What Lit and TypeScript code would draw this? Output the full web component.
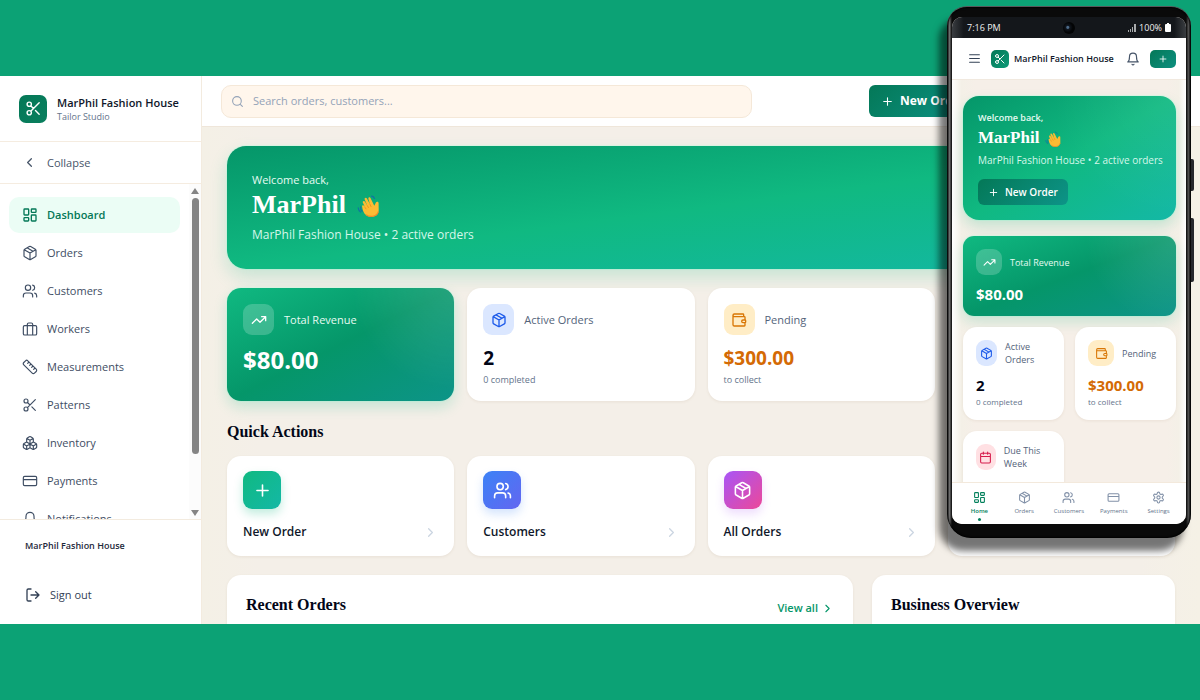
import { LitElement, html, css, svg } from "lit";
import { customElement, property } from "lit/decorators.js";
import { classMap } from "lit/directives/class-map.js";

const circle = (x: number, y: number, r: number) =>
  `M${x - r} ${y}a${r} ${r} 0 1 0 ${2 * r} 0a${r} ${r} 0 1 0 ${-2 * r} 0`;

const ICONS: Record<string, string> = {
  scissors: `${circle(6, 6, 3)}M8.12 8.12 12 12M20 4 8.12 15.88${circle(6, 18, 3)}M14.8 14.8 20 20`,
  dashboard:
    "M4 3h5a1 1 0 0 1 1 1v7a1 1 0 0 1-1 1H4a1 1 0 0 1-1-1V4a1 1 0 0 1 1-1zM15 3h5a1 1 0 0 1 1 1v3a1 1 0 0 1-1 1h-5a1 1 0 0 1-1-1V4a1 1 0 0 1 1-1zM15 12h5a1 1 0 0 1 1 1v7a1 1 0 0 1-1 1h-5a1 1 0 0 1-1-1v-7a1 1 0 0 1 1-1zM4 16h5a1 1 0 0 1 1 1v3a1 1 0 0 1-1 1H4a1 1 0 0 1-1-1v-3a1 1 0 0 1 1-1z",
  package:
    "M11 21.73a2 2 0 0 0 2 0l7-4A2 2 0 0 0 21 16V8a2 2 0 0 0-1-1.73l-7-4a2 2 0 0 0-2 0l-7 4A2 2 0 0 0 3 8v8a2 2 0 0 0 1 1.73zM12 22V12M3.29 7 12 12l8.71-5M7.5 4.27l9 5.15",
  users: `M16 21v-2a4 4 0 0 0-4-4H6a4 4 0 0 0-4 4v2${circle(9, 7, 4)}M22 21v-2a4 4 0 0 0-3-3.87M16 3.13a4 4 0 0 1 0 7.75`,
  briefcase:
    "M4 7h16a2 2 0 0 1 2 2v10a2 2 0 0 1-2 2H4a2 2 0 0 1-2-2V9a2 2 0 0 1 2-2zM16 21V5a2 2 0 0 0-2-2h-4a2 2 0 0 0-2 2v16",
  ruler:
    "M21.3 15.3a2.4 2.4 0 0 1 0 3.4l-2.6 2.6a2.4 2.4 0 0 1-3.4 0L2.7 8.7a2.41 2.41 0 0 1 0-3.4l2.6-2.6a2.41 2.41 0 0 1 3.4 0ZM14.5 12.5l2-2M11.5 9.5l2-2M8.5 6.5l2-2M17.5 15.5l2-2",
  boxes:
    "M2.97 12.92A2 2 0 0 0 2 14.63v3.24a2 2 0 0 0 .97 1.71l3 1.8a2 2 0 0 0 2.06 0L12 19v-5.5l-5-3-4.03 2.42ZM7 16.5l-4.74-2.85M7 16.5l5-3M7 16.5v5.17M12 13.5V19l3.97 2.38a2 2 0 0 0 2.06 0l3-1.8a2 2 0 0 0 .97-1.71v-3.24a2 2 0 0 0-.97-1.71L17 10.5l-5 3ZM17 16.5l-5-3M17 16.5l4.74-2.85M17 16.5v5.17M7.97 4.42A2 2 0 0 0 7 6.13v4.37l5 3 5-3V6.13a2 2 0 0 0-.97-1.71l-3-1.8a2 2 0 0 0-2.06 0l-3 1.8ZM12 8 7.26 5.15M12 8l4.74-2.85M12 13.5V8",
  card: "M4 5h16a2 2 0 0 1 2 2v10a2 2 0 0 1-2 2H4a2 2 0 0 1-2-2V7a2 2 0 0 1 2-2zM2 10h20",
  bell: "M6 8a6 6 0 0 1 12 0c0 7 3 9 3 9H3s3-2 3-9M10.3 21a1.94 1.94 0 0 0 3.4 0",
  logout: "M9 21H5a2 2 0 0 1-2-2V5a2 2 0 0 1 2-2h4M16 17l5-5-5-5M21 12H9",
  wallet:
    "M19 7V4a1 1 0 0 0-1-1H5a2 2 0 0 0 0 4h15a1 1 0 0 1 1 1v4h-3a2 2 0 0 0 0 4h3a1 1 0 0 0 1-1v-2a1 1 0 0 0-1-1M3 5v14a2 2 0 0 0 2 2h15a1 1 0 0 0 1-1v-4",
  trend: "M22 7l-8.5 8.5-5-5L2 17M16 7h6v6",
  calendar:
    "M8 2v4M16 2v4M5 4h14a2 2 0 0 1 2 2v14a2 2 0 0 1-2 2H5a2 2 0 0 1-2-2V6a2 2 0 0 1 2-2zM3 10h18",
  gear: `M12.22 2h-.44a2 2 0 0 0-2 2v.18a2 2 0 0 1-1 1.73l-.43.25a2 2 0 0 1-2 0l-.15-.08a2 2 0 0 0-2.73.73l-.22.38a2 2 0 0 0 .73 2.73l.15.1a2 2 0 0 1 1 1.72v.51a2 2 0 0 1-1 1.74l-.15.09a2 2 0 0 0-.73 2.73l.22.38a2 2 0 0 0 2.73.73l.15-.08a2 2 0 0 1 2 0l.43.25a2 2 0 0 1 1 1.73V20a2 2 0 0 0 2 2h.44a2 2 0 0 0 2-2v-.18a2 2 0 0 1 1-1.73l.43-.25a2 2 0 0 1 2 0l.15.08a2 2 0 0 0 2.73-.73l.22-.39a2 2 0 0 0-.73-2.73l-.15-.08a2 2 0 0 1-1-1.74v-.5a2 2 0 0 1 1-1.74l.15-.09a2 2 0 0 0 .73-2.73l-.22-.38a2 2 0 0 0-2.73-.73l-.15.08a2 2 0 0 1-2 0l-.43-.25a2 2 0 0 1-1-1.73V4a2 2 0 0 0-2-2z${circle(12, 12, 3)}`,
  search: `${circle(11, 11, 8)}M21 21l-4.3-4.3`,
  plus: "M5 12h14M12 5v14",
  left: "M15 18l-6-6 6-6",
  right: "M9 18l6-6-6-6",
  menu: "M3 5h18M3 12h18M3 19h18",
};

const icon = (name: string, size: number, weight = 2) => html`<svg
  class="icon"
  width=${size}
  height=${size}
  viewBox="0 0 24 24"
  fill="none"
  stroke="currentColor"
  stroke-width=${weight}
  stroke-linecap="round"
  stroke-linejoin="round"
  aria-hidden="true"
>
  ${svg`<path d=${ICONS[name]}></path>`}
</svg>`;

const hand = (size: number) => html`<svg class="icon" width=${size} height=${size} viewBox="0 0 24 24" aria-hidden="true">
  ${svg`
    <path d="M9.2 22.2C6.4 20 5.6 16.600 5.100 13.400C4.900 12.300 6.500 11.700 7.200 12.900L8.100 14.500L5.800 9.600C5.200 8.100 7.100 7.200 7.900 8.600L10.400 12.700L7.700 6.600C7.100 5 9.100 4.100 9.900 5.600L13 11.300L11.400 5.900C11 4.300 13 3.700 13.600 5.200L17.300 12.700L18.900 9.600C19.600 8.300 21.800 8.700 21.600 10.300L21.700 17.200C21.500 21.800 18.400 23.600 15 23.700C12.700 23.800 10.800 23.400 9.200 22.200Z" fill="#fcbb33"/>
    <path d="M10.400 12.700L11.400 14.500M13 11.300L14 13.600M8.100 14.500L9 15.900" stroke="#e98d1c" stroke-width=".8" stroke-linecap="round"/>
    <path d="M9 21.700C12.500 24.200 19.500 24.500 21.400 18.500" fill="none" stroke="#f08a28" stroke-width="1.100"/>
    <path d="M3.600 13.900C3.500 15.700 4 17.300 5.100 18.500M1.200 14.900C1.400 16.700 2.200 18.100 3.600 19.100M14.600 3.100C16 3.300 17 4.200 17.500 5.500" fill="none" stroke="#1172a5" stroke-width="1.100" stroke-linecap="round"/>`}
</svg>`;

interface Stat {
  icon: string;
  label: string;
  value: string;
  note?: string;
  tone: string;
}

const REVENUE: Stat = { icon: "trend", label: "Total Revenue", value: "$80.00", tone: "revenue" };
const ACTIVE: Stat = { icon: "package", label: "Active Orders", value: "2", note: "0 completed", tone: "blue" };
const PENDING: Stat = { icon: "wallet", label: "Pending", value: "$300.00", note: "to collect", tone: "amber" };
const DUE: Stat = { icon: "calendar", label: "Due This Week", value: "", tone: "rose" };

const base = css`
  * {
    box-sizing: border-box;
  }
  h1, h2, p {
    margin: 0;
  }
  a {
    color: inherit;
    text-decoration: none;
  }
  button, input {
    font: inherit;
    color: inherit;
    border: 0;
    margin: 0;
    padding: 0;
    background: none;
  }
  .icon {
    display: block;
    flex-shrink: 0;
  }
  .serif {
    font-family: "Liberation Serif", serif;
    font-weight: 700;
  }
`;

@customElement("stat-card")
class StatCard extends LitElement {
  @property({ attribute: false }) stat!: Stat;
  @property({ type: Boolean, reflect: true }) compact = false;

  static styles = [
    base,
    css`
      :host {
        display: block;
        min-width: 0;
        --pad: 16px;
        --tile: 31px;
      }
      :host([compact]) {
        --pad: 13px;
        --tile: 26px;
      }
      .card {
        height: 100%;
        padding: var(--pad) var(--pad) 14px;
        border-radius: 14px;
        background: #fff;
        box-shadow: 0 1px 3px rgba(120, 90, 40, 0.09);
      }
      .head {
        display: flex;
        align-items: center;
        gap: 10px;
        color: #53637a;
        font-size: 11px;
        line-height: 14px;
        font-weight: 500;
      }
      .tile {
        width: var(--tile);
        height: var(--tile);
        display: grid;
        place-items: center;
        border-radius: 9px;
      }
      .value {
        min-height: 30px;
        margin-top: 8px;
        font-size: 19px;
        line-height: 30px;
        font-weight: 700;
        color: #020617;
      }
      .note {
        font-size: 9px;
        line-height: 14px;
        color: #64748b;
      }
      .blue .tile {
        background: #dbe7ff;
        color: #1d5bea;
      }
      .amber .tile {
        background: #ffedc6;
        color: #d97706;
      }
      .amber .value {
        color: #d46a04;
      }
      .rose .tile {
        background: #ffe0e3;
        color: #d61c4c;
      }
      .revenue {
        color: #fff;
        background:
          radial-gradient(circle at 100% 0, rgba(255, 255, 255, 0.13), transparent 40%),
          linear-gradient(to bottom right, #10b981, #059669 50%, #0d9488);
        box-shadow: 0 6px 14px rgba(16, 185, 129, 0.2), 0 0 0 1px rgba(209, 250, 229, 0.5);
      }
      .revenue .head {
        color: #e6fbf2;
      }
      .revenue .tile {
        background: rgba(255, 255, 255, 0.2);
        color: #fff;
      }
      .revenue .value {
        color: #fff;
        font-size: 24px;
        line-height: 34px;
      }
      :host([compact]) .card {
        padding-bottom: 12px;
      }
      :host([compact]) .head {
        gap: 8px;
        font-size: 9px;
        line-height: 13px;
      }
      :host([compact]) .value {
        min-height: 22px;
        font-size: 15px;
        line-height: 22px;
      }
      :host([compact]) .note {
        font-size: 8px;
        line-height: 12px;
      }
      :host([compact]) .revenue {
        padding-bottom: 11px;
        border-radius: 11px;
      }
    `,
  ];

  render() {
    const s = this.stat;
    return html`<article class=${classMap({ card: true, [s.tone]: true })}>
      <div class="head">
        <span class="tile">${icon(s.icon, this.compact ? 13 : 16)}</span>
        <span>${s.label}</span>
      </div>
      <p class="value">${s.value}</p>
      ${s.note ? html`<p class="note">${s.note}</p>` : ""}
    </article>`;
  }
}

@customElement("phone-preview")
class PhonePreview extends LitElement {
  static styles = [
    base,
    css`
      :host {
        display: block;
        width: 244px;
        aspect-ratio: 244 / 532;
        color: #0f172a;
      }
      .body {
        position: relative;
        height: 100%;
        padding: 10px 5px 14px;
        border-radius: 20px 20px 24px 24px;
        background: linear-gradient(90deg, #1a1a1a, #777 1%, #0a0a0a 2%, #0a0a0a 98%, #555 99%, #111);
        border-top: 1px solid #56585b;
        box-shadow: -8px 13px 7px rgba(0, 0, 0, 0.54), inset 0 0 2px 1px #000;
      }
      .key {
        position: absolute;
        right: -3px;
        width: 3px;
        border-radius: 0 2px 2px 0;
        background: #26282c;
      }
      .power {
        top: 152px;
        height: 32px;
      }
      .volume {
        top: 211px;
        height: 64px;
      }
      .screen {
        height: 100%;
        display: flex;
        flex-direction: column;
        overflow: hidden;
        border-radius: 10px;
        background: #f5efe8;
      }
      .status {
        display: grid;
        grid-template-columns: 1fr auto 1fr;
        align-items: center;
        height: 21px;
        flex-shrink: 0;
        padding: 0 15px;
        background: linear-gradient(90deg, #3a3d41, #14171b 5%, #14171b 95%, #3a3d41);
        color: #f1f1f1;
        font-size: 9px;
      }
      .lens {
        width: 12px;
        height: 12px;
        border-radius: 50%;
        background: radial-gradient(circle at 40% 45%, #4d6b8a 0 1px, #10161f 2px, #030405 5px);
      }
      .battery {
        display: flex;
        align-items: center;
        justify-content: flex-end;
        gap: 3px;
      }
      header {
        display: flex;
        align-items: center;
        height: 42px;
        flex-shrink: 0;
        padding: 0 10px 0 16px;
        background: #fff;
        border-bottom: 1px solid #f1e9df;
      }
      .menu {
        color: #334155;
      }
      .logo {
        width: 18px;
        height: 18px;
        margin: 0 5px 0 10px;
        display: grid;
        place-items: center;
        border-radius: 5px;
        background: linear-gradient(135deg, #047857, #0d9a78);
        color: #fff;
      }
      .name {
        flex: 1;
        font-size: 9px;
        font-weight: 600;
        white-space: nowrap;
      }
      .alerts {
        color: #475569;
      }
      .add {
        width: 26px;
        height: 18px;
        margin-left: 10px;
        display: grid;
        place-items: center;
        border-radius: 5px;
        background: linear-gradient(135deg, #047857, #0d8f80);
        color: #fff;
      }
      main {
        flex: 1;
        min-height: 0;
        overflow: hidden;
        padding: 16px 10px 0 11px;
        background: linear-gradient(90deg, #fff, #f4f0e7 4%, #f6efe8 10%, #f6efe8 92%, #f4f0e7 97%, #fff);
      }
      .hero {
        padding: 15px;
        border-radius: 16px;
        color: #fff;
        background:
          radial-gradient(circle at 100% 0, rgba(255, 255, 255, 0.07), transparent 50%),
          linear-gradient(to bottom right, #059669, #10b981 50%, #14b8a6);
        box-shadow: 0 7px 14px rgba(16, 185, 129, 0.22), 0 0 0 1px rgba(209, 250, 229, 0.6);
      }
      .welcome {
        font-size: 9px;
        line-height: 14px;
        font-weight: 600;
        color: #e6fbf2;
      }
      h1 {
        display: flex;
        align-items: center;
        gap: 6px;
        font-size: 17px;
        line-height: 26px;
      }
      .sub {
        font-size: 10px;
        line-height: 18px;
        color: #d5f7ea;
        white-space: nowrap;
      }
      .new {
        display: inline-flex;
        align-items: center;
        gap: 6px;
        height: 26px;
        margin-top: 10px;
        padding: 0 10px;
        border-radius: 6px;
        background: linear-gradient(135deg, #047857, #0d9488);
        font-size: 10px;
        font-weight: 600;
      }
      .stats {
        display: grid;
        grid-template-columns: 1fr 1fr;
        gap: 11px;
        margin-top: 16px;
      }
      .wide {
        grid-column: span 2;
      }
      nav {
        display: grid;
        grid-template-columns: repeat(5, minmax(0, 1fr));
        height: 42px;
        flex-shrink: 0;
        padding: 8px 5px 0;
        background: #fff;
        border-top: 1px solid #f3e9dc;
        color: #8291a8;
        font-size: 6px;
        line-height: 8px;
        font-weight: 500;
      }
      nav a {
        display: flex;
        flex-direction: column;
        align-items: center;
        gap: 3px;
      }
      nav span {
        color: #64748b;
      }
      nav .current,
      .current span {
        color: #04805c;
        font-weight: 600;
      }
      .current::after {
        content: "";
        width: 3px;
        height: 3px;
        border-radius: 50%;
        background: #04805c;
      }
    `,
  ];

  render() {
    const tabs = [
      ["dashboard", "Home"],
      ["package", "Orders"],
      ["users", "Customers"],
      ["card", "Payments"],
      ["gear", "Settings"],
    ];
    return html`<div class="body">
      <span class="key power"></span><span class="key volume"></span>
      <div class="screen">
        <div class="status">
          <span>7:16 PM</span>
          <span class="lens"></span>
          <span class="battery">
            <svg class="icon" width="8" height="8" viewBox="0 0 8 8" fill="#a9abad" aria-hidden="true">
              <path d="M0 6h1v2H0zM2 5h1v3H2zM4 3h1v5H4zM6 0h2v8H6z" />
            </svg>
            <span>100%</span>
            <svg class="icon" width="6" height="9" viewBox="0 0 6 9" fill="#fff" aria-hidden="true">
              <path d="M2 0h2v1h1a1 1 0 0 1 1 1v6a1 1 0 0 1-1 1H1a1 1 0 0 1-1-1V2a1 1 0 0 1 1-1h1z" />
            </svg>
          </span>
        </div>
        <header>
          <button class="menu" aria-label="Menu">${icon("menu", 13)}</button>
          <span class="logo">${icon("scissors", 12)}</span>
          <span class="name">MarPhil Fashion House</span>
          <button class="alerts" aria-label="Notifications">${icon("bell", 14)}</button>
          <button class="add" aria-label="New order">${icon("plus", 10)}</button>
        </header>
        <main>
          <section class="hero">
            <p class="welcome">Welcome back,</p>
            <h1 class="serif">MarPhil ${hand(17)}</h1>
            <p class="sub">MarPhil Fashion House • 2 active orders</p>
            <button class="new">${icon("plus", 11)}New Order</button>
          </section>
          <section class="stats">
            <stat-card class="wide" compact .stat=${REVENUE}></stat-card>
            <stat-card compact .stat=${ACTIVE}></stat-card>
            <stat-card compact .stat=${PENDING}></stat-card>
            <stat-card compact .stat=${DUE}></stat-card>
          </section>
        </main>
        <nav>
          ${tabs.map(
            ([name, label], i) => html`<a href="#" class=${classMap({ current: i === 0 })}>
              ${icon(name, 13)}<span>${label}</span>
            </a>`
          )}
        </nav>
      </div>
    </div>`;
  }
}

@customElement("app-root")
class AppRoot extends LitElement {
  static styles = [
    base,
    css`
      :host {
        display: block;
        box-sizing: border-box;
        position: relative;
        height: 100vh;
        padding: 76px 0;
        overflow: hidden;
        background: #0ca275;
        color: #0f172a;
        font-family: "Open Sans", "Noto Sans", sans-serif;
        font-size: 12px;
        line-height: 16px;
      }
      .window {
        height: 100%;
        display: grid;
        grid-template-columns: 202px minmax(0, 1fr);
        grid-template-rows: minmax(0, 1fr);
        overflow: hidden;
        background: linear-gradient(90deg, #f4f0e6 202px, #f4efe8 260px, #f4efe8 95%, #f5f1e6);
      }
      aside {
        display: flex;
        flex-direction: column;
        min-height: 0;
        background: #fff;
        border-right: 1px solid #f3ebdf;
      }
      .brand {
        display: flex;
        align-items: center;
        gap: 10px;
        height: 66px;
        flex-shrink: 0;
        padding: 0 19px;
        border-bottom: 1px solid #f5ece0;
      }
      .logo {
        width: 28px;
        height: 28px;
        display: grid;
        place-items: center;
        border-radius: 7px;
        background: linear-gradient(135deg, #047857, #0a7f5e);
        color: #fff;
      }
      .brand-name {
        font-size: 11px;
        line-height: 15px;
        font-weight: 600;
        white-space: nowrap;
      }
      .brand-sub {
        font-size: 9px;
        line-height: 13px;
        color: #64748b;
      }
      .collapse {
        display: flex;
        align-items: center;
        gap: 10px;
        height: 42px;
        flex-shrink: 0;
        padding: 0 22px;
        border-bottom: 1px solid #f5ece0;
        color: #475569;
        font-size: 11px;
      }
      .menu {
        display: flex;
        flex: 1;
        min-height: 0;
        overflow: hidden;
      }
      nav {
        flex: 1;
        display: flex;
        flex-direction: column;
        gap: 2px;
        padding: 13px 9px 0;
      }
      nav a {
        display: flex;
        align-items: center;
        gap: 9px;
        height: 36px;
        flex-shrink: 0;
        padding: 0 13px;
        border-radius: 10px;
        color: #3e4d63;
        font-size: 11px;
      }
      nav .current {
        background: #ebfdf5;
        color: #047857;
        font-weight: 600;
      }
      .scroll {
        width: 12px;
        display: flex;
        flex-direction: column;
        align-items: center;
        padding: 4px 0 3px;
        background: #fcfcfc;
        color: #858585;
      }
      .thumb {
        flex: 0 1 78%;
        width: 7px;
        margin: 4px 0 auto;
        border-radius: 4px;
        background: currentColor;
      }
      .account {
        height: 105px;
        flex-shrink: 0;
        padding: 18px 25px 0;
        border-top: 1px solid #f3ebdf;
        color: #1e293b;
      }
      .account-name {
        font-size: 9px;
        font-weight: 600;
      }
      .signout {
        display: flex;
        align-items: center;
        gap: 9px;
        margin-top: 33px;
        color: #334155;
        font-size: 11px;
      }
      .page {
        display: flex;
        flex-direction: column;
        min-width: 0;
        overflow: hidden;
      }
      .top {
        display: grid;
        grid-template-columns: minmax(0, 1fr) 312px;
        align-items: center;
        justify-items: start;
        height: 51px;
        flex-shrink: 0;
        padding: 0 19px;
        background: #fff;
        border-bottom: 1px solid #efe6da;
      }
      .search {
        display: flex;
        align-items: center;
        gap: 9px;
        width: 100%;
        max-width: 531px;
        height: 33px;
        padding: 0 9px;
        border: 1px solid #f5e8d8;
        border-radius: 10px;
        background: #fff6ec;
        color: #94a3b8;
      }
      .search input {
        flex: 1;
        min-width: 0;
        font-size: 11px;
        outline: 0;
      }
      .search input::placeholder {
        color: #94a3b8;
        opacity: 1;
      }
      .primary {
        display: flex;
        align-items: center;
        gap: 6px;
        height: 32px;
        padding: 0 12px;
        border-radius: 6px;
        background: linear-gradient(135deg, #047857, #0d9488);
        color: #fff;
        font-size: 12px;
        font-weight: 700;
      }
      main {
        padding: 19px 25px 0;
      }
      .hero {
        height: 123px;
        padding: 25px;
        border-radius: 19px;
        background: linear-gradient(to bottom right, #059669, #10b981 50%, #14b8a6);
        box-shadow: 0 8px 18px rgba(16, 185, 129, 0.2), 0 0 0 1px rgba(209, 250, 229, 0.6);
        color: #fff;
      }
      .welcome {
        font-size: 11px;
        line-height: 18px;
        font-weight: 500;
        color: #e6fbf2;
      }
      h1 {
        display: flex;
        align-items: center;
        gap: 11px;
        font-size: 26px;
        line-height: 32px;
      }
      .hero-sub {
        margin-top: 5px;
        font-size: 12px;
        line-height: 18px;
        color: #d5f7ea;
      }
      .grid {
        display: grid;
        grid-template-columns: repeat(4, minmax(0, 1fr));
        gap: 13px;
      }
      .stats {
        margin-top: 19px;
      }
      h2 {
        font-size: 16px;
        line-height: 20px;
        color: #020617;
      }
      .quick {
        margin: 21px 0 14px;
      }
      .action {
        display: grid;
        grid-template-columns: 1fr auto;
        align-items: center;
        row-gap: 13px;
        height: 100px;
        padding: 15px 16px 14px;
        border-radius: 14px;
        background: #fff;
        box-shadow: 0 1px 3px rgba(120, 90, 40, 0.09);
        font-size: 12px;
        line-height: 20px;
        font-weight: 600;
      }
      .tile {
        grid-column: span 2;
        width: 38px;
        height: 38px;
        display: grid;
        place-items: center;
        border-radius: 9px;
        color: #fff;
      }
      .green {
        background: linear-gradient(135deg, #10b981, #14b8a6);
        box-shadow: 0 5px 10px rgba(16, 185, 129, 0.25);
      }
      .blue {
        background: linear-gradient(135deg, #3b82f6, #6366f1);
        box-shadow: 0 5px 10px rgba(59, 130, 246, 0.22);
      }
      .pink {
        background: linear-gradient(135deg, #a855f7, #ec4899);
        box-shadow: 0 5px 10px rgba(168, 85, 247, 0.2);
      }
      .gray {
        background: linear-gradient(135deg, #64748b, #475569);
      }
      .arrow {
        color: #cbd5e1;
      }
      .panels {
        display: grid;
        grid-template-columns: minmax(0, 1fr) 303px;
        gap: 19px;
        margin-top: 19px;
      }
      .panel {
        display: flex;
        justify-content: space-between;
        align-items: flex-start;
        height: 220px;
        padding: 20px 19px;
        border-radius: 14px;
        background: #fff;
        box-shadow: 0 1px 3px rgba(120, 90, 40, 0.09);
      }
      .all {
        display: flex;
        align-items: center;
        gap: 3px;
        margin-top: 5px;
        color: #059669;
        font-size: 11px;
        font-weight: 600;
      }
      .phone {
        position: absolute;
        top: 6px;
        right: 9px;
      }
    `,
  ];

  render() {
    const links = [
      ["dashboard", "Dashboard"],
      ["package", "Orders"],
      ["users", "Customers"],
      ["briefcase", "Workers"],
      ["ruler", "Measurements"],
      ["scissors", "Patterns"],
      ["boxes", "Inventory"],
      ["card", "Payments"],
      ["bell", "Notifications"],
    ];
    const actions = [
      ["plus", "New Order", "green"],
      ["users", "Customers", "blue"],
      ["package", "All Orders", "pink"],
      ["briefcase", "Workers", "gray"],
    ];
    return html`
      <div class="window">
        <aside>
          <div class="brand">
            <span class="logo">${icon("scissors", 17)}</span>
            <div>
              <p class="brand-name">MarPhil Fashion House</p>
              <p class="brand-sub">Tailor Studio</p>
            </div>
          </div>
          <button class="collapse">${icon("left", 15)}Collapse</button>
          <div class="menu">
            <nav>
              ${links.map(
                ([name, label], i) => html`<a href="#" class=${classMap({ current: i === 0 })}>
                  ${icon(name, 16, i === 0 ? 2 : 1.75)}${label}
                </a>`
              )}
            </nav>
            <div class="scroll" aria-hidden="true">
              <svg class="icon" width="8" height="6" viewBox="0 0 8 6" fill="currentColor"><path d="M4 0 8 6H0z" /></svg>
              <span class="thumb"></span>
              <svg class="icon" width="8" height="6" viewBox="0 0 8 6" fill="currentColor"><path d="M4 6 8 0H0z" /></svg>
            </div>
          </div>
          <div class="account">
            <p class="account-name">MarPhil Fashion House</p>
            <button class="signout">${icon("logout", 16)}Sign out</button>
          </div>
        </aside>
        <div class="page">
          <header class="top">
            <label class="search">
              ${icon("search", 13)}
              <input type="search" placeholder="Search orders, customers..." aria-label="Search orders, customers" />
            </label>
            <button class="primary">${icon("plus", 13)}New Order</button>
          </header>
          <main>
            <section class="hero">
              <p class="welcome">Welcome back,</p>
              <h1 class="serif">MarPhil ${hand(24)}</h1>
              <p class="hero-sub">MarPhil Fashion House • 2 active orders</p>
            </section>
            <section class="grid stats">
              ${[REVENUE, ACTIVE, PENDING, DUE].map((s) => html`<stat-card .stat=${s}></stat-card>`)}
            </section>
            <h2 class="serif quick">Quick Actions</h2>
            <section class="grid">
              ${actions.map(
                ([name, label, tone]) => html`<a href="#" class="action">
                  <span class=${classMap({ tile: true, [tone]: true })}>${icon(name, 19)}</span>
                  <span>${label}</span>
                  <span class="arrow">${icon("right", 15)}</span>
                </a>`
              )}
            </section>
            <section class="panels">
              <div class="panel">
                <h2 class="serif">Recent Orders</h2>
                <a href="#" class="all">View all ${icon("right", 13)}</a>
              </div>
              <div class="panel"><h2 class="serif">Business Overview</h2></div>
            </section>
          </main>
        </div>
      </div>
      <phone-preview class="phone"></phone-preview>
    `;
  }
}
